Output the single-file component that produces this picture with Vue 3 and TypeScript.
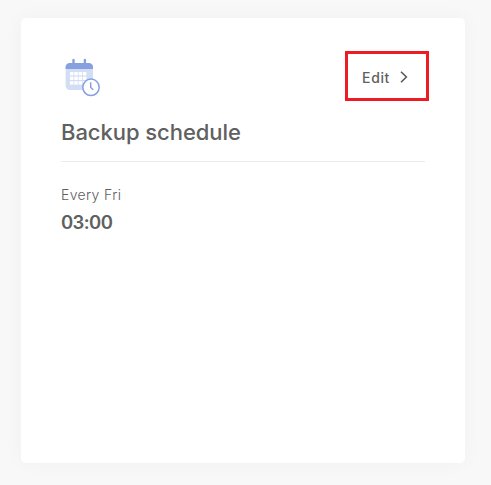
<script setup lang="ts">
interface Schedule {
  title: string
  day: string
  time: string
}

const schedule: Schedule = {
  title: 'Backup schedule',
  day: 'Every Fri',
  time: '03:00',
}

const columns: number[] = [6, 10.3, 14.6, 18.9]
const rows: number[] = [14, 18.6, 23.2]
</script>

<template>
  <main class="page">
    <section class="card">
      <header class="card-header">
        <svg class="icon" width="38" height="40" viewBox="0 0 38 40" aria-hidden="true">
          <rect x="1.6" y="5" width="27.4" height="27" rx="4.2" fill="#d3def4" />
          <path d="M1.6 11V9.2A4.2 4.2 0 0 1 5.8 5H24.8A4.2 4.2 0 0 1 29 9.2V11Z" fill="#86a0e0" />
          <path d="M9.5 2V6M20.9 2V6" stroke="#86a0e0" stroke-width="2.4" stroke-linecap="round" />
          <template v-for="y in rows" :key="y">
            <rect v-for="x in columns" :key="x" :x="x" :y="y" width="3.5" height="3.4" fill="#fff" />
          </template>
          <circle cx="27" cy="29.3" r="8.2" fill="#fff" stroke="#86a0e0" stroke-width="1.5" />
          <path d="M26.7 24.3V29.5L29.3 31.8" fill="none" stroke="#86a0e0" stroke-width="1.5" />
        </svg>
        <button class="edit" type="button">
          <span class="edit-label">Edit</span>
          <svg width="10" height="14" viewBox="0 0 10 14" aria-hidden="true">
            <path d="M2 1.7L7.4 7L2 12.3" fill="none" stroke="#555" stroke-width="1.5" />
          </svg>
        </button>
      </header>
      <h2 class="title">{{ schedule.title }}</h2>
      <div class="details">
        <span class="day">{{ schedule.day }}</span>
        <strong class="time">{{ schedule.time }}</strong>
      </div>
    </section>
  </main>
</template>

<style>
body {
  background: #f8f8f8;
}
</style>

<style scoped>
.page {
  box-sizing: border-box;
  height: 485px;
  padding: 18px 26px 22px 21px;
  background: #f8f8f8;
  color: #606060;
  font-family: Inter, sans-serif;
}
.card {
  box-sizing: border-box;
  height: 445px;
  padding: 33px 36px 0 40px;
  border-radius: 5px;
  background: #fff;
  box-shadow: 0 0 20px rgba(0, 0, 0, 0.035);
}
.card-header {
  display: flex;
  justify-content: space-between;
  align-items: flex-start;
}
.icon {
  margin: 7px 0 0 3px;
}
.edit {
  box-sizing: border-box;
  display: flex;
  align-items: center;
  gap: 8px;
  width: 84px;
  height: 50px;
  padding: 1px 0 0 13px;
  border: 3px solid #ed1c24;
  background: #fff;
  color: #606060;
  font: 500 14px/20px Inter, sans-serif;
  letter-spacing: 0.6px;
}
.edit-label {
  width: 30px;
  padding-top: 2px;
  white-space: nowrap;
}
.title {
  box-sizing: border-box;
  height: 61px;
  margin: 0 4px 0 0;
  padding-top: 16px;
  border-bottom: 1px solid #ebebeb;
  font-size: 22px;
  line-height: 30px;
  font-weight: 500;
  letter-spacing: -0.05px;
}
.details {
  display: flex;
  flex-direction: column;
  padding-top: 22px;
}
.day {
  font-size: 14px;
  line-height: 22px;
  font-weight: 300;
  letter-spacing: 0.35px;
}
.time {
  margin-top: 2px;
  font-size: 18.5px;
  line-height: 28px;
  font-weight: 600;
  letter-spacing: -0.6px;
}
</style>
